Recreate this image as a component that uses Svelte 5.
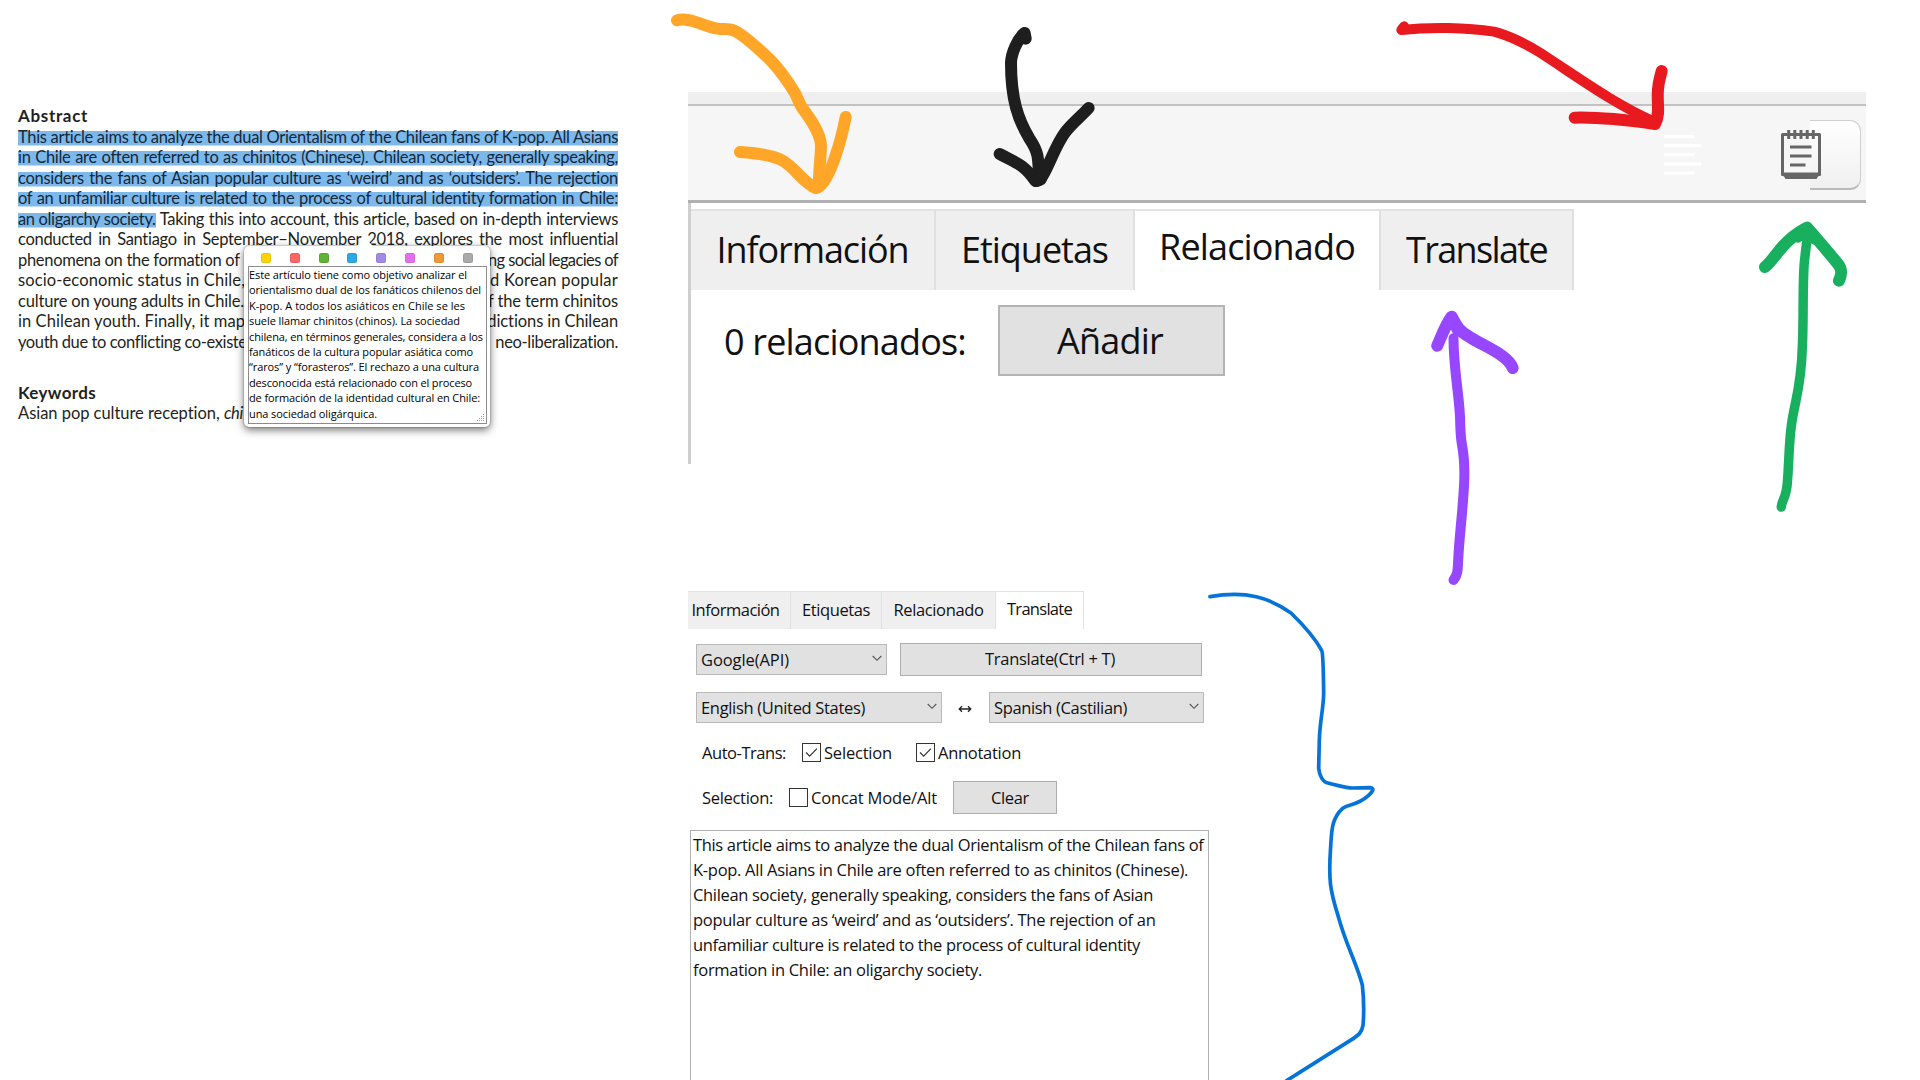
<script>
  // Spreads or tightens a label's letters until it fills the given width.
  function fit(node, width) {
    const natural = node.getBoundingClientRect().width;
    node.style.letterSpacing = `${(width - natural) / node.textContent.length}px`;
  }

  const marked = [
    'This article aims to analyze the dual Orientalism of the Chilean fans of K-pop. All Asians',
    'in Chile are often referred to as chinitos (Chinese). Chilean society, generally speaking,',
    'considers the fans of Asian popular culture as ‘weird’ and as ‘outsiders’. The rejection',
    'of an unfamiliar culture is related to the process of cultural identity formation in Chile:'
  ];

  const covered = [
    ['phenomena on the formation of', 222, 'ng social legacies of', 130],
    ['socio-economic status in Chile,', 227, 'd Korean popular', 128],
    ['culture on young adults in Chile.', 226, 'f the term chinitos', 130],
    ['in Chilean youth. Finally, it map', 227, 'dictions in Chilean', 131],
    ['youth due to conflicting co-existe', 229, 'neo-liberalization.', 123]
  ];

  const swatches = ['yellow', 'red', 'green', 'blue', 'violet', 'pink', 'orange', 'gray'];

  const note = [
    ['Este artículo tiene como objetivo analizar el', 218],
    ['orientalismo dual de los fanáticos chilenos del', 232],
    ['K-pop. A todos los asiáticos en Chile se les', 216],
    ['suele llamar chinitos (chinos). La sociedad', 211],
    ['chilena, en términos generales, considera a los', 234],
    ['fanáticos de la cultura popular asiática como', 224],
    ['“raros” y “forasteros”. El rechazo a una cultura', 230],
    ['desconocida está relacionado con el proceso', 223],
    ['de formación de la identidad cultural en Chile:', 231],
    ['una sociedad oligárquica.', 128]
  ];

  const source = [
    ['This article aims to analyze the dual Orientalism of the Chilean fans of', 510.5],
    ['K-pop. All Asians in Chile are often referred to as chinitos (Chinese).', 495],
    ['Chilean society, generally speaking, considers the fans of Asian', 460],
    ['popular culture as ‘weird’ and as ‘outsiders’. The rejection of an', 462.5],
    ['unfamiliar culture is related to the process of cultural identity', 447],
    ['formation in Chile: an oligarchy society.', 289]
  ];
</script>

{#snippet chevron()}
  <svg class="chevron" viewBox="0 0 10 7"><path d="M.7 1 5 5.3 9.3 1" /></svg>
{/snippet}

{#snippet check(on)}
  <span class="box">
    {#if on}<svg viewBox="0 0 16 16"><path d="M2.2 8 6 11.8 13.8 3.8" /></svg>{/if}
  </span>
{/snippet}

<div class="board">
  <article>
    <h2><span use:fit={70}>Abstract</span></h2>
    {#each marked as line}
      <p class="row full hl">{line}</p>
    {/each}
    <p class="row full"><mark use:fit={137.5}>an oligarchy society.</mark> Taking this into account, this article, based on in-depth interviews</p>
    <p class="row full">conducted in Santiago in September–November 2018, explores the most influential</p>
    {#each covered as [left, lw, right, rw]}
      <p class="row split"><span use:fit={lw}>{left}</span><span use:fit={rw}>{right}</span></p>
    {/each}
    <h2 class="keywords"><span use:fit={78}>Keywords</span></h2>
    <p class="row split"><span><span use:fit={202}>Asian pop culture reception,</span> <em>chi</em></span></p>

    <aside class="popup">
      <div class="swatches">
        {#each swatches as s}<i class={s}></i>{/each}
      </div>
      <div class="note">
        {#each note as [line, w]}<p><span use:fit={w}>{line}</span></p>{/each}
        <svg class="grip" viewBox="0 0 8 8"><path d="M6 0h1v1H6zM4 2h1v1H4zM6 2h1v1H6zM2 4h1v1H2zM4 4h1v1H4zM6 4h1v1H6zM0 6h1v1H0zM2 6h1v1H2zM4 6h1v1H4zM6 6h1v1H6z" /></svg>
      </div>
    </aside>
  </article>

  <main>
    <section class="large">
      <div class="strip"></div>
      <div class="toolbar">
        <svg class="lines" viewBox="0 0 37 41"><path d="M0 1.5h30.5M0 10.6h37M0 19.8h30.5M0 29h37M0 38.1h30.5" /></svg>
        <div class="pad-button">
          <div class="half"></div>
          <svg class="pad" viewBox="0 0 40 49">
            <path class="frame" d="M1.5 4.5h37v40h-37z" />
            <path class="rings" d="M7.7 0v9M13.8 0v9M20 0v9M26.2 0v9M32.3 0v9" />
            <path class="text" d="M9 17h21.5M9 26h21.5M9 35h15.5" />
            <path class="base" d="M0 42.5h40v2.5l-3 1.5-1.5 2.5h-31l-1.5-2.5-3-1.5z" />
          </svg>
        </div>
      </div>
      <div class="body">
        <nav>
          <span class="tab t1"><span use:fit={192}>Información</span></span>
          <span class="tab t2"><span use:fit={147}>Etiquetas</span></span>
          <span class="tab t3 on"><span use:fit={196}>Relacionado</span></span>
          <span class="tab t4"><span use:fit={141}>Translate</span></span>
        </nav>
        <div class="related">
          <span use:fit={242}>0 relacionados:</span>
          <button><span use:fit={106}>Añadir</span></button>
        </div>
      </div>
    </section>

    <section class="small">
      <nav>
        <span class="tab s1"><span use:fit={88}>Información</span></span>
        <span class="tab s2"><span use:fit={68}>Etiquetas</span></span>
        <span class="tab s3"><span use:fit={90}>Relacionado</span></span>
        <span class="tab s4 on"><span use:fit={65}>Translate</span></span>
      </nav>
      <div class="line l1">
        <div class="select google"><span use:fit={88}>Google(API)</span>{@render chevron()}</div>
        <button class="go"><span use:fit={130}>Translate(Ctrl + T)</span></button>
      </div>
      <div class="line l2">
        <div class="select english"><span use:fit={164}>English (United States)</span>{@render chevron()}</div>
        <svg class="swap" viewBox="0 0 14 8"><path d="M1.5 4h11M4 1.2 1.2 4 4 6.8M10 1.2 12.8 4 10 6.8" /></svg>
        <div class="select spanish"><span use:fit={133}>Spanish (Castilian)</span>{@render chevron()}</div>
      </div>
      <div class="line l3">
        <div class="label a"><span use:fit={84}>Auto-Trans:</span></div>
        {@render check(true)}<div class="opt a"><span use:fit={68}>Selection</span></div>
        {@render check(true)}<div><span use:fit={83}>Annotation</span></div>
      </div>
      <div class="line l4">
        <div class="label b"><span use:fit={71}>Selection:</span></div>
        {@render check(false)}<div class="opt b"><span use:fit={126}>Concat Mode/Alt</span></div>
        <button class="clear"><span use:fit={38}>Clear</span></button>
      </div>
      <div class="area">
        {#each source as [line, w]}<p><span use:fit={w}>{line}</span></p>{/each}
      </div>
    </section>
  </main>

  <svg class="ink" viewBox="0 0 1920 1080">
    <g class="orange-ink" transform="translate(660 0) scale(.33333)">
      <path d="M51 61C85 49 130 79 172 86 190 89 205 85 220 91 245 100 300 150 335 184 370 222 385 245 407 283 415 300 418 310 426 323 450 355 483 400 483 438 483 470 477 500 477 550" />
      <path d="M240 456C300 460 340 466 368 482 410 507 430 550 468 564 508 560 548 400 557 351" />
      <path d="M473 562 492 540" />
    </g>
    <g class="black-ink" transform="translate(660 0) scale(.33333)">
      <path d="M1097 116 1094 99C1072 117 1054 160 1053 188 1053 300 1075 360 1108 415 1135 455 1136 470 1137 540" />
      <path d="M1019 462C1060 485 1090 490 1126 543 1155 545 1175 450 1217 395 1240 366 1262 350 1286 324" />
      <path d="M1128 543 1142 538 1160 500" />
    </g>
    <g class="red-ink" transform="translate(1380 0) scale(.33333)">
      <path class="thin" d="M72 79 64 90C150 80 260 82 342 95 382 105 440 132 480 158 600 236 700 310 825 366" />
      <path d="M584 353C660 351 740 360 825 372 842 340 830 310 834 268 836 240 840 235 845 213" />
    </g>
    <g class="green-ink" transform="translate(1300 200) scale(.36991 .33333)">
      <path class="thin" d="M1301 921C1303 895 1315 900 1318 840 1322 780 1322 730 1328 680 1335 610 1355 570 1358 440 1362 350 1358 240 1364 180L1373 95" />
      <path d="M1257 201C1290 170 1300 125 1371 83 1400 120 1435 165 1455 193 1467 210 1464 225 1457 242" />
      <path d="M1345 110 1371 88 1392 116" />
    </g>
    <g class="purple-ink" transform="translate(1300 200) scale(.36991 .33333)">
      <path class="thin" d="M415 1140C430 1120 425 1105 430 1040 440 900 452 820 438 735 432 700 434 670 432 640 428 570 415 500 415 415" />
      <path d="M371 437C380 415 395 370 410 350 420 370 425 390 460 412 500 440 562 465 575 504" />
      <path d="M402 370 411 358 428 392" />
    </g>
    <g class="blue-ink" transform="translate(1180 570) scale(.33333)">
      <path d="M90 80C200 60 270 84 333 129 365 160 405 205 425 241 430 250 430 300 431 370 430 420 420 450 418 510L416 595C418 615 428 637 444 639 490 650 500 655 520 654L570 653C585 655 578 665 565 677 530 708 510 700 488 715 455 745 455 780 452 830 445 930 450 960 475 1040 500 1130 530 1180 547 1245 552 1290 553 1320 549 1366 545 1390 535 1396 510 1412L320 1532" />
    </g>
  </svg>
</div>

<style>
  :global(body) {
    background: #fff;
    overflow: hidden;
  }
  p,
  h2 {
    margin: 0;
  }
  .board {
    position: relative;
    display: grid;
    grid-template-columns: 688px 1fr;
    width: 1920px;
    height: 1080px;
    overflow: hidden;
    background: #fff;
    color: #111;
    font-family: 'Open Sans', 'Noto Sans', sans-serif;
  }
  span {
    white-space: nowrap;
  }

  /* Article */
  article {
    position: relative;
    box-sizing: border-box;
    padding: 105px 70px 0 18px;
    font-family: Lato, 'Open Sans', sans-serif;
    color: #231f20;
  }
  h2 {
    height: 20.5px;
    font-size: 17px;
    line-height: 22px;
    font-weight: 700;
  }
  h2.keywords {
    margin-top: 30.5px;
  }
  h2 span,
  .split span {
    display: inline-block;
  }
  .row {
    height: 20.5px;
    font-size: 16.5px;
    line-height: 22px;
    white-space: nowrap;
  }
  .full {
    white-space: normal;
    text-align: justify;
    text-align-last: justify;
    letter-spacing: -0.3px;
    word-spacing: -1px;
  }
  .hl,
  mark {
    color: #14283c;
    background: linear-gradient(#7db8ea, #7db8ea) 0 5px / 100% 14.5px no-repeat;
  }
  mark {
    display: inline-block;
    height: 20.5px;
    text-align-last: left;
    word-spacing: 0;
    letter-spacing: 0;
    white-space: nowrap;
  }
  .split {
    display: flex;
    justify-content: space-between;
  }
  em {
    letter-spacing: -0.4px;
  }

  .popup {
    position: absolute;
    left: 244px;
    top: 246px;
    box-sizing: border-box;
    width: 246px;
    height: 181px;
    padding: 7px 3px 3px 4px;
    border-radius: 5px;
    background: #fff;
    box-shadow: 0 3px 8px rgba(0, 0, 0, 0.55), 0 0 2px rgba(0, 0, 0, 0.4);
    font-family: 'Open Sans', sans-serif;
    color: #000;
  }
  .popup::before {
    content: '';
    position: absolute;
    left: 113px;
    top: -8px;
    border: 8px solid transparent;
    border-top: 0;
    border-bottom-color: #fff;
  }
  .swatches {
    display: flex;
    gap: 18.8px;
    padding-left: 13px;
  }
  .swatches i {
    width: 10px;
    height: 10px;
    border-radius: 2.5px;
    box-shadow: inset 0 0 0 1px rgba(0, 0, 0, 0.08);
  }
  .yellow { background: #ffd400; }
  .red { background: #ff6666; }
  .green { background: #5fb236; }
  .blue { background: #2ea8e5; }
  .violet { background: #a28ae5; }
  .pink { background: #e56eee; }
  .orange { background: #f19837; }
  .gray { background: #aaaaaa; }
  .note {
    position: relative;
    box-sizing: border-box;
    height: 158px;
    margin-top: 3px;
    border: 1px solid #8c8c8c;
    font-size: 11px;
    font-weight: 500;
  }
  .note p {
    height: 15.4px;
    line-height: 15px;
  }
  .note span,
  .area span {
    display: inline-block;
  }
  .grip {
    position: absolute;
    right: 1px;
    bottom: 1px;
    width: 8px;
    height: 8px;
    fill: #999;
  }

  /* Enlarged panel */
  .large {
    width: 1178px;
    height: 372px;
    margin-top: 92px;
    font-size: 36px;
  }
  .strip {
    height: 12px;
    background: #efefef;
    border-bottom: 2px solid #c2c2c2;
  }
  .toolbar {
    display: flex;
    justify-content: flex-end;
    align-items: flex-start;
    box-sizing: border-box;
    height: 97px;
    padding: 14px 5px 0 0;
    background: #f6f6f6;
    border-bottom: 3px solid #b0b0b0;
  }
  .lines {
    width: 37px;
    height: 41px;
    margin: 15px 80px 0 0;
    stroke: #fff;
    stroke-width: 3;
  }
  .pad-button {
    display: grid;
    width: 80px;
    height: 70px;
  }
  .half,
  .pad {
    grid-area: 1 / 1;
  }
  .half {
    box-sizing: border-box;
    justify-self: end;
    width: 51px;
    border: 1px solid #cfcfcf;
    border-bottom: 2px solid #b9b9b9;
    border-left: 0;
    border-radius: 0 11px 11px 0;
    background: linear-gradient(#fff, #f0f0f0);
  }
  .pad {
    width: 40px;
    height: 49px;
    margin-top: 10px;
    stroke: #666;
    stroke-width: 3;
    fill: none;
  }
  .pad .base {
    fill: #666;
    stroke: none;
  }
  .pad .frame {
    stroke-linejoin: round;
  }
  .body {
    box-sizing: border-box;
    height: 261px;
    padding-top: 6px;
    border-left: 3px solid #cfcfcf;
  }
  nav {
    display: flex;
  }
  .tab {
    display: flex;
    align-items: center;
    justify-content: center;
    box-sizing: border-box;
    background: #efefef;
    border-top: 2px solid #e2e2e2;
    border-right: 2px solid #e0e0e0;
  }
  .tab.on {
    background: #fff;
  }
  .large .tab {
    height: 81px;
    padding-bottom: 3px;
  }
  .large .tab.on {
    padding-bottom: 9px;
  }
  .t1 { width: 245px; }
  .t2 { width: 199px; }
  .t3 { width: 246px; }
  .t4 { width: 193px; }
  .related {
    display: flex;
    align-items: center;
    gap: 32px;
    margin-top: 15px;
    padding-left: 33px;
  }
  .related > span {
    padding-top: 2px;
  }
  button {
    display: flex;
    align-items: center;
    justify-content: center;
    box-sizing: border-box;
    padding: 0;
    border: 1px solid #adadad;
    border-radius: 0;
    background: #e1e1e1;
    color: inherit;
    font: inherit;
  }
  .related button {
    width: 227px;
    height: 71px;
    padding: 0 3px 1px 0;
    border-width: 2px;
    border-color: #b4b4b4;
  }

  /* Translate panel */
  .small {
    width: 522px;
    margin-top: 127px;
    font-size: 16.5px;
  }
  .small .tab {
    height: 38px;
    padding-bottom: 2px;
    border-width: 1px;
  }
  .small .tab.on {
    padding-bottom: 4px;
  }
  .small .s1 {
    width: 103px;
    padding-right: 7px;
  }
  .s2 { width: 91px; }
  .s3 { width: 114px; }
  .s4 { width: 88px; }
  .line {
    display: flex;
    align-items: center;
  }
  .select {
    display: flex;
    align-items: center;
    justify-content: space-between;
    box-sizing: border-box;
    height: 31px;
    padding: 0 4px;
    border: 1px solid #b9b9b9;
    background: #e1e1e1;
  }
  .chevron {
    width: 10px;
    height: 7px;
    margin-top: -3px;
    fill: none;
    stroke: #555;
    stroke-width: 1.1;
  }
  .l1 {
    height: 34px;
    margin-top: 13px;
    padding-left: 8px;
  }
  .google {
    width: 191px;
    margin: 1px 13px 0 0;
  }
  .go {
    width: 302px;
    height: 33px;
    padding: 0 2px 1px 0;
  }
  .l2 {
    height: 31px;
    margin-top: 16px;
    padding-left: 8px;
  }
  .english { width: 246px; }
  .spanish { width: 215px; }
  .swap {
    width: 14px;
    height: 8px;
    margin: 2px 17px 0 16px;
    fill: none;
    stroke: #222;
    stroke-width: 1.3;
  }
  .l3 {
    height: 24px;
    margin-top: 17px;
    padding-left: 14px;
  }
  .l4 {
    height: 33px;
    margin-top: 17px;
    padding-left: 14px;
  }
  .label {
    flex: none;
  }
  .label.a { width: 100px; }
  .label.b { width: 87px; }
  .box {
    display: flex;
    flex: none;
    align-items: center;
    justify-content: center;
    box-sizing: border-box;
    width: 19px;
    height: 19px;
    margin-right: 3px;
    border: 1.5px solid #333;
    background: #fff;
  }
  .box svg {
    width: 15px;
    height: 15px;
    fill: none;
    stroke: #333;
    stroke-width: 1.3;
  }
  .opt.a { width: 92px; }
  .opt.b { width: 142px; }
  .clear {
    width: 104px;
    height: 33px;
    padding: 0 0 1px 10px;
  }
  .area {
    box-sizing: border-box;
    width: 519px;
    height: 300px;
    margin: 16px 0 0 2px;
    padding: 1px 0 0 2px;
    border: 1px solid #b0b0b0;
  }
  .area p {
    height: 25.07px;
    line-height: 25px;
  }

  /* Hand-drawn arrows and brace over the panels */
  .ink {
    position: absolute;
    inset: 0;
    width: 1920px;
    height: 1080px;
    fill: none;
    stroke-linecap: round;
    stroke-linejoin: round;
  }
  .ink path {
    vector-effect: non-scaling-stroke;
    stroke-width: 12px;
  }
  .orange-ink { stroke: #ffa629; }
  .black-ink { stroke: #1e1e1e; }
  .red-ink { stroke: #e8191f; }
  .green-ink { stroke: #18b05f; }
  .purple-ink { stroke: #9747ff; }
  .blue-ink { stroke: #0573d8; }
  .ink .red-ink .thin { stroke-width: 10px; }
  .ink .green-ink .thin { stroke-width: 9.5px; }
  .ink .purple-ink .thin { stroke-width: 10px; }
  .ink .blue-ink path { stroke-width: 3.7px; }
</style>
